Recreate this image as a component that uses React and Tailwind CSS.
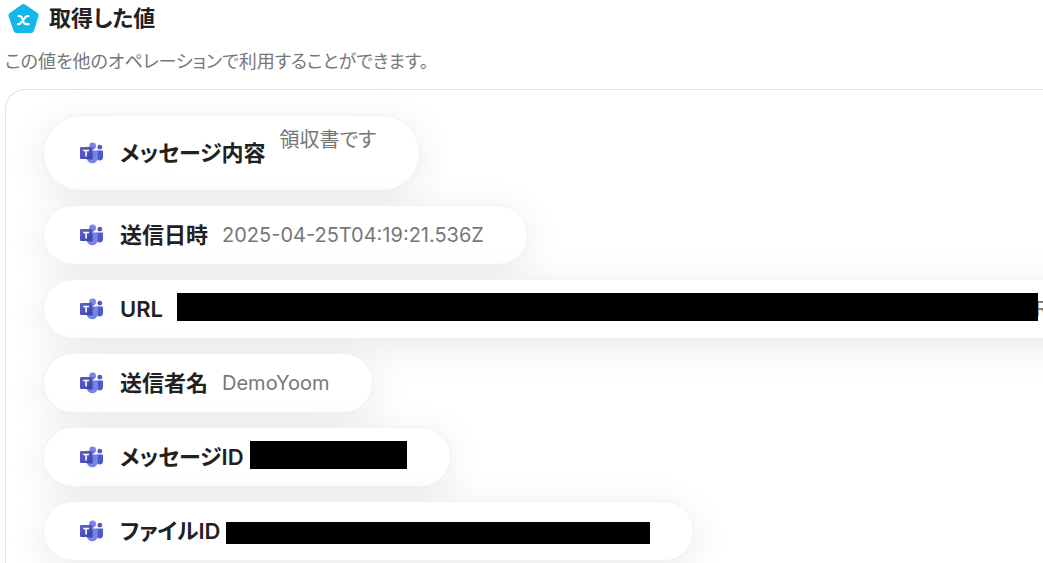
import React from 'react';

function TeamsIcon() {
  return (
    <svg viewBox="0 0 24 22" className="h-[22px] w-6 shrink-0" aria-hidden="true">
      <defs>
        <linearGradient id="teams-tile" x1="0" y1="0" x2="1" y2="1">
          <stop offset="0" stopColor="#5a62c3" />
          <stop offset="0.5" stopColor="#4d55bd" />
          <stop offset="1" stopColor="#3940ab" />
        </linearGradient>
      </defs>
      <circle cx="19.8" cy="5.2" r="2.4" fill="#5059c9" />
      <path d="M16.5 8.6h5.400c.6 0 1.100.5 1.100 1.100v5.400a3.400 3.400 0 0 1-3.400 3.400c-1.900 0-3.100-1.300-3.100-3.400z" fill="#5059c9" />
      <circle cx="12.6" cy="4" r="3.400" fill="#7b83eb" />
      <path d="M7.300 8.600h9.500c.6 0 1 .5 1 1v6.200a5.500 5.500 0 0 1-11 0V9.600c0-.5 0-1 .5-1z" fill="#7b83eb" />
      <path d="M9.600 5h2.300c.8 0 1.500.7 1.500 1.500v10.100c0 .8-.7 1.400-1.500 1.400H7.300a5.600 5.600 0 0 1-.4-2.200V8.600h2.700z" fill="#3f479f" opacity="0.45" />
      <rect x="0" y="5" width="12" height="12" rx="1" fill="url(#teams-tile)" />
      <path d="M3.200 7.800h5.800v1.500H6.900v5.300H5.300V9.300H3.200z" fill="#fff" />
    </svg>
  );
}

function ValueIcon() {
  return (
    <svg viewBox="0 0 32 32" className="size-8 shrink-0" aria-hidden="true">
      <path d="M15.500 5 27.500 13.500 23 28H8.500L3.500 13.500Z" fill="#12b8ea" stroke="#12b8ea" strokeWidth="6" strokeLinejoin="round" />
      <path d="M10.500 14h1.200c1 0 1.600.4 2 1.400l2.300 5.400c.4 1 1 1.400 2 1.400h2.500M20.500 14h-.8c-1 0-1.700.4-2.400 1.200l-4.600 5.700c-.8.9-1.400 1.300-2.400 1.300h-.3" fill="none" stroke="#fff" strokeWidth="2.200" strokeLinecap="round" />
    </svg>
  );
}

function Row({ label, tall = false, gap = 'gap-[14px]', children }) {
  return (
    <li
      className={`flex w-max items-center rounded-full border border-[#f2f2f2] bg-white pl-9 pr-[43px] shadow-[0_8px_40px_rgba(0,0,0,0.09)] ${tall ? 'h-[76px]' : 'h-[60px]'}`}
    >
      <TeamsIcon />
      <div className={`ml-4 flex items-center ${gap}`}>
        <span className="text-[22px] leading-8 font-semibold text-[#212121]">{label}</span>
        {children}
      </div>
    </li>
  );
}

function Value({ children }) {
  return <span className="text-[20px] leading-7 text-[#777]">{children}</span>;
}

export default function App() {
  return (
    <main
      lang="ja"
      className="flex h-screen flex-col overflow-hidden bg-white pl-[5px] font-['Inter','Noto_Sans_CJK_JP',sans-serif] whitespace-nowrap [font-feature-settings:'palt']"
    >
      <header>
        <div className="flex h-9 items-center gap-[9px] pl-[3px]">
          <ValueIcon />
          <h1 className="text-[22px] leading-8 font-semibold text-[#212121]">取得した値</h1>
        </div>
        <p className="mt-3 text-[18px] leading-7 text-[#777]">
          この値を他のオペレーションで利用することができます。
        </p>
      </header>
      <section className="mt-[13px] flex-1 rounded-tl-[20px] border-t border-l border-[#e0e0e0] pt-[25px] pl-[37px]">
        <ul className="flex flex-col gap-[14px]">
          <Row label="メッセージ内容" tall>
            <div className="pb-[26px]">
              <Value>領収書です</Value>
            </div>
          </Row>
          <Row label="送信日時">
            <Value>2025-04-25T04:19:21.536Z</Value>
          </Row>
          <Row label="URL">
            <div className="flex items-center">
              <span className="relative mb-1 h-7 w-[861px] bg-black" />
              <span className="-ml-[3px]">
                <Value>R</Value>
              </span>
            </div>
          </Row>
          <Row label="送信者名">
            <Value>DemoYoom</Value>
          </Row>
          <Row label="メッセージID" gap="gap-[6px]">
            <span className="mb-1 h-7 w-[157px] bg-black" />
          </Row>
          <Row label="ファイルID" gap="gap-[6px]">
            <span className="mt-1 h-[22px] w-[424px] bg-black" />
          </Row>
        </ul>
      </section>
    </main>
  );
}
